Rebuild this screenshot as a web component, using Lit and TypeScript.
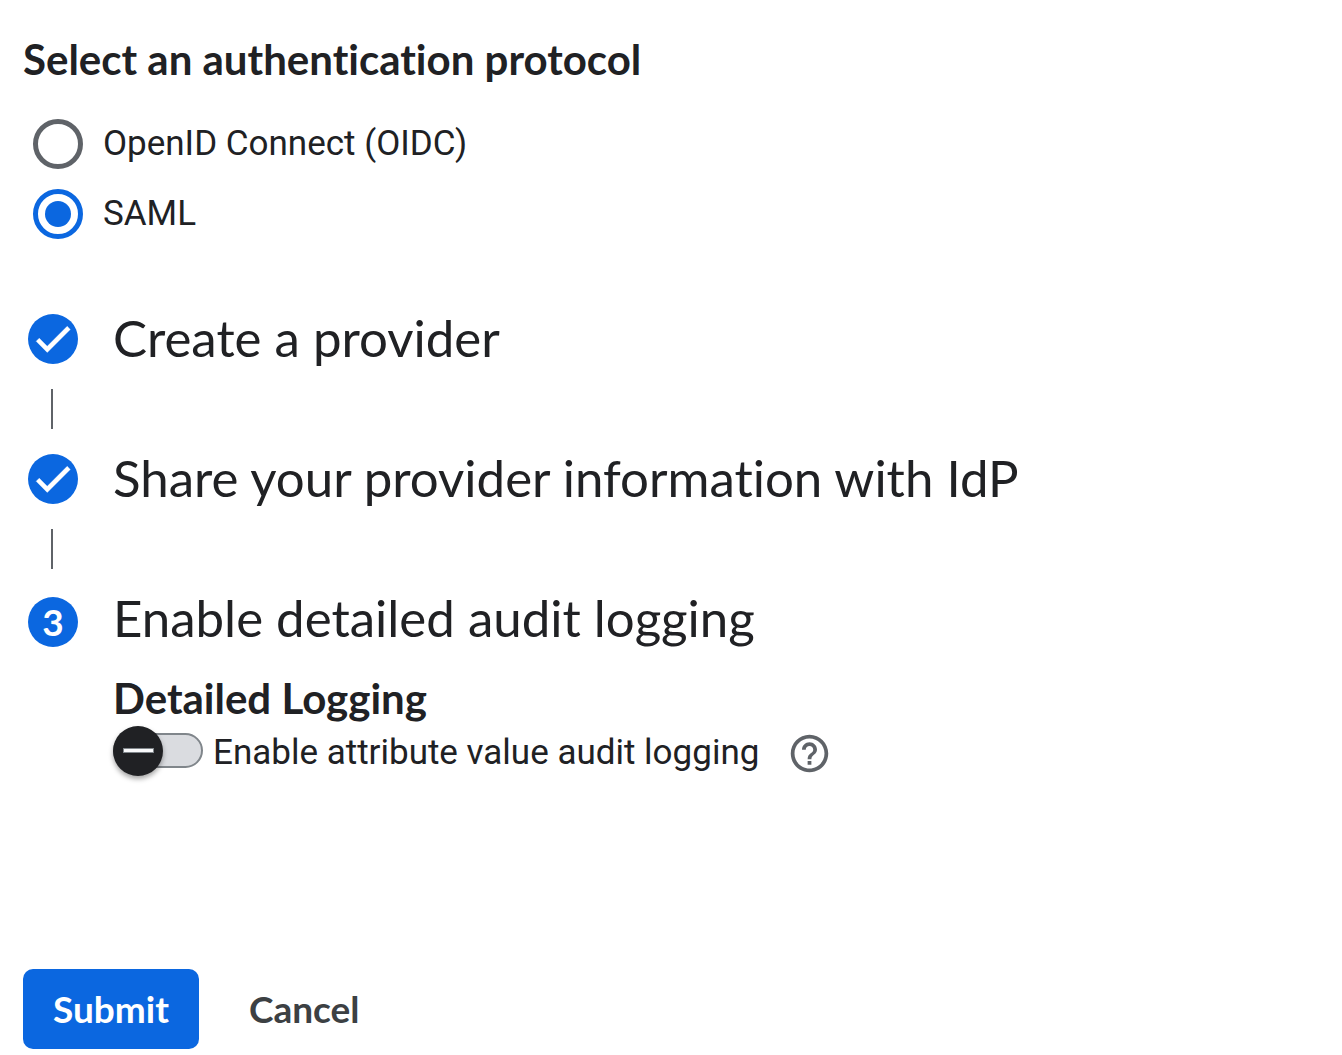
import { LitElement, html, css } from "lit";
import { customElement, property, state } from "lit/decorators.js";

const display = css`"Google Sans", Lato, "Open Sans", sans-serif`;

@customElement("step-header")
class StepHeader extends LitElement {
  @property({ type: Number }) number = 1;
  @property({ type: Boolean }) done = false;
  @property() heading = "";

  static styles = css`
    :host { display: block; }
    .head { display: flex; align-items: center; gap: 35px; min-height: 50px; }
    .head.current { min-height: 56px; }
    .badge {
      flex: none; display: flex; align-items: center; justify-content: center;
      width: 50px; height: 50px; border-radius: 50%;
      background: #0b67e0; color: #fff;
      font: 700 37px/48px ${display};
    }
    .badge svg { width: 46px; height: 46px; }
    .title {
      margin: 0; align-self: flex-start;
      font: 400 51px/48px ${display}; font-variant-ligatures: none; color: #202124;
    }
  `;

  render() {
    return html`
      <div class="head ${this.done ? "" : "current"}">
        <span class="badge">
          ${this.done
            ? html`<svg viewBox="0 0 24 24" fill="#fff" role="img" aria-label="Completed">
                <path d="M9 15.8 4.83 11.6l-1.6 1.6L9 19 21 7l-1.6-1.6z" stroke="#fff" stroke-width=".2"/>
              </svg>`
            : this.number}
        </span>
        <h2 class="title">${this.heading}</h2>
      </div>
    `;
  }
}

@customElement("app-root")
class AppRoot extends LitElement {
  @state() private protocol = "saml";
  @state() private logging = false;

  static styles = css`
    :host {
      display: block; background: #fff; color: #202124;
      font: 400 35px/50px Roboto, sans-serif;
    }
    * { box-sizing: border-box; }
    .page { padding: 30px 23px 6px; }
    .protocols { margin: 0; padding: 0; border: 0; min-width: 0; }
    .legend { padding: 0; margin-bottom: 31px; font: 700 42px/58px ${display}; font-variant-ligatures: none; }
    .options { display: flex; flex-direction: column; gap: 20px; padding-left: 10px; }
    .option { display: flex; align-items: center; gap: 20px; }
    .radio {
      appearance: none; flex: none; display: grid; place-items: center;
      width: 50px; height: 50px; margin: 0;
      border: 5px solid #5f6368; border-radius: 50%;
    }
    .radio:checked { border-color: #0b67e0; }
    .radio:checked::before {
      content: ""; width: 26px; height: 26px; border-radius: 50%; background: #0b67e0;
    }
    .steps { list-style: none; margin: 75px 0 0; padding: 0 5px; }
    .step + .step::before {
      content: ""; display: block; width: 2px; height: 40px; margin: 25px 23px; background: #5f6368;
    }
    .body { padding-left: 85px; margin-top: 24px; }
    .subtitle { margin: 0; font: 700 42px/48px ${display}; font-variant-ligatures: none; }
    .setting { display: flex; align-items: center; gap: 10px; margin-top: 1px; }
    .caption { display: flex; align-items: center; gap: 28px; padding-top: 5px; }
    .switch {
      appearance: none; flex: none; display: flex; align-items: center; justify-content: flex-start;
      width: 90px; height: 35px; margin: 0;
      border: 2px solid #80868b; border-radius: 18px; background: #dadce0;
    }
    .switch::before {
      content: ""; flex: none; width: 50px; height: 50px; margin: 0 -2px; border-radius: 50%;
      background:
        linear-gradient(#f8f9fa, #f8f9fa) center / 29px 3px no-repeat,
        linear-gradient(#80868b, #80868b) center / 31px 5px no-repeat,
        #202124;
      box-shadow: 0 3px 5px rgba(0, 0, 0, 0.35);
    }
    .switch:checked { justify-content: flex-end; background: #8ab4f8; }
    .help { display: flex; padding: 0; border: 0; background: none; color: #5f6368; }
    .help svg { width: 45px; height: 45px; }
    .actions { display: flex; gap: 20px; margin-top: 191px; }
    .button {
      height: 80px; padding: 0 30px; border: 0; border-radius: 10px;
      background: none; color: #3c4043; font: 700 37px/48px ${display};
    }
    .button.primary { background: #0b67e0; color: #fff; }
  `;

  private option(id: string, text: string) {
    return html`
      <label class="option">
        <input class="radio" type="radio" name="protocol" value=${id}
          .checked=${this.protocol === id} @change=${() => (this.protocol = id)} />
        <span>${text}</span>
      </label>
    `;
  }

  render() {
    return html`
      <form class="page" @submit=${(e: Event) => e.preventDefault()}>
        <fieldset class="protocols">
          <legend class="legend">Select an authentication protocol</legend>
          <div class="options">
            ${this.option("oidc", "OpenID Connect (OIDC)")}
            ${this.option("saml", "SAML")}
          </div>
        </fieldset>

        <ol class="steps">
          <li class="step"><step-header done heading="Create a provider"></step-header></li>
          <li class="step">
            <step-header done .number=${2} heading="Share your provider information with IdP"></step-header>
          </li>
          <li class="step">
            <step-header .number=${3} heading="Enable detailed audit logging"></step-header>
            <div class="body">
              <h3 class="subtitle">Detailed Logging</h3>
              <div class="setting">
                <input class="switch" id="logging" type="checkbox" role="switch"
                  .checked=${this.logging}
                  @change=${(e: Event) => (this.logging = (e.target as HTMLInputElement).checked)} />
                <div class="caption">
                  <label for="logging">Enable attribute value audit logging</label>
                  <button class="help" type="button" aria-label="Help">
                    <svg viewBox="0 0 24 24" fill="currentColor" aria-hidden="true">
                      <path d="M11 18h2v-2h-2v2zm1-16C6.48 2 2 6.48 2 12s4.48 10 10 10 10-4.48 10-10S17.52 2 12 2zm0 18c-4.41 0-8-3.59-8-8s3.59-8 8-8 8 3.59 8 8-3.59 8-8 8zm0-14c-2.21 0-4 1.79-4 4h2c0-1.1.9-2 2-2s2 .9 2 2c0 2-3 1.75-3 5h2c0-2.25 3-2.5 3-5 0-2.21-1.79-4-4-4z"/>
                    </svg>
                  </button>
                </div>
              </div>
            </div>
          </li>
        </ol>

        <div class="actions">
          <button class="button primary" type="submit">Submit</button>
          <button class="button" type="button">Cancel</button>
        </div>
      </form>
    `;
  }
}
